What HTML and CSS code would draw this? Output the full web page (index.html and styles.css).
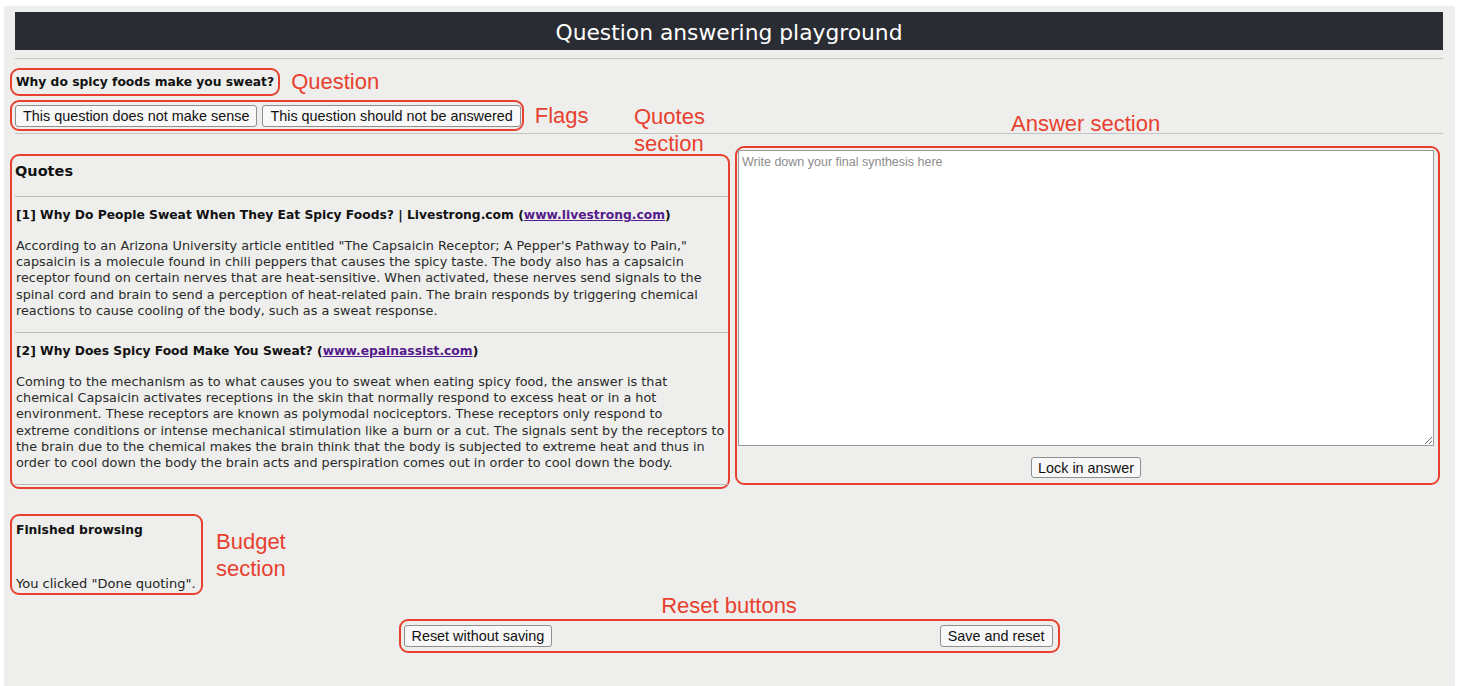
FILE: index.html
```html
<!DOCTYPE html>
<html lang="en">
<head>
<meta charset="utf-8">
<title>Question answering playground</title>
<link rel="stylesheet" href="styles.css">
</head>
<body>
<div class="page">
  <header class="topbar">Question answering playground</header>
  <hr class="rule">

  <div class="annot-row">
    <div class="box box-question"><h3 class="question">Why do spicy foods make you sweat?</h3></div>
    <span class="label">Question</span>
  </div>

  <div class="annot-row">
    <div class="box box-flags">
      <button class="btn">This question does not make sense</button>
      <button class="btn">This question should not be answered</button>
    </div>
    <span class="label">Flags</span>
  </div>

  <hr class="rule rule-tight">

  <span class="label label-quotes">Quotes<br>section</span>
  <span class="label label-answer">Answer section</span>

  <div class="main">
    <section class="box box-quotes">
      <h2 class="quotes-head">Quotes</h2>
      <hr class="qrule">
      <div class="quote">
        <h4 class="quote-title">[1] Why Do People Sweat When They Eat Spicy Foods? | Livestrong.com (<a href="#">www.livestrong.com</a>)</h4>
        <p class="quote-text">According to an Arizona University article entitled "The Capsaicin Receptor; A Pepper's Pathway to Pain,"<br>capsaicin is a molecule found in chili peppers that causes the spicy taste. The body also has a capsaicin<br>receptor found on certain nerves that are heat-sensitive. When activated, these nerves send signals to the<br>spinal cord and brain to send a perception of heat-related pain. The brain responds by triggering chemical<br>reactions to cause cooling of the body, such as a sweat response.</p>
      </div>
      <hr class="qrule">
      <div class="quote">
        <h4 class="quote-title">[2] Why Does Spicy Food Make You Sweat? (<a href="#">www.epainassist.com</a>)</h4>
        <p class="quote-text">Coming to the mechanism as to what causes you to sweat when eating spicy food, the answer is that<br>chemical Capsaicin activates receptions in the skin that normally respond to excess heat or in a hot<br>environment. These receptors are known as polymodal nociceptors. These receptors only respond to<br>extreme conditions or intense mechanical stimulation like a burn or a cut. The signals sent by the receptors to<br>the brain due to the chemical makes the brain think that the body is subjected to extreme heat and thus in<br>order to cool down the body the brain acts and perspiration comes out in order to cool down the body.</p>
      </div>
      <hr class="qrule">
    </section>

    <section class="box box-answer">
      <textarea class="answer" placeholder="Write down your final synthesis here"></textarea>
      <div class="lock-row"><button class="btn">Lock in answer</button></div>
    </section>
  </div>

  <div class="annot-row budget-row">
    <div class="box box-budget">
      <h4 class="budget-head">Finished browsing</h4>
      <p class="budget-text">You clicked "Done quoting".</p>
    </div>
    <span class="label label-budget">Budget<br>section</span>
  </div>

  <div class="label label-reset">Reset buttons</div>
  <div class="box box-reset">
    <button class="btn">Reset without saving</button>
    <button class="btn">Save and reset</button>
  </div>
</div>
</body>
</html>
```

FILE: styles.css
```css
html, body {
  margin: 0;
  padding: 0;
  background: #ffffff;
}

body {
  font-family: "DejaVu Sans", Verdana, sans-serif;
  color: #222;
}

.page {
  position: relative;
  margin: 6px 3px 0 4px;
  padding: 6px 12px 0 11px;
  background: #eeefec;
  height: 680px;
  box-sizing: border-box;
}

.topbar {
  height: 38px;
  box-sizing: border-box;
  padding-top: 4px;
  line-height: 34px;
  background: #2a2c33;
  color: #fff;
  text-align: center;
  font-size: 21.8px;
}

.rule {
  border: 0;
  border-top: 1px solid #c4c5c3;
  margin: 8px 0 0;
  height: 0;
}

.rule-tight {
  margin-top: 2px;
}

.annot-row {
  display: flex;
  align-items: center;
  gap: 11px;
  margin-top: 4px;
}

.annot-row:first-of-type {
  margin-top: 9px;
}

.box {
  border: 2px solid #e8402f;
  border-radius: 9px;
  box-sizing: border-box;
}

.box-question {
  height: 28px;
  margin-left: -5px;
  padding: 0 4px;
  display: flex;
  align-items: center;
}

.question {
  margin: 0;
  font-size: 12.3px;
  font-weight: bold;
  color: #111;
}

.label {
  font-family: "Liberation Sans", Arial, sans-serif;
  font-size: 22px;
  color: #e8402f;
  line-height: 24px;
}

.box-flags {
  margin-left: -5px;
  padding: 3px 1px 2px 3px;
  display: flex;
  gap: 5px;
}

.btn {
  font-family: "Liberation Sans", Arial, sans-serif;
  font-size: 14.4px;
  color: #111;
  background: #f8f8f8;
  border: 1px solid #8f8f8f;
  border-radius: 3px;
  height: 22px;
  padding: 0 7px;
  margin: 0;
  line-height: 20px;
}

.label-quotes {
  position: absolute;
  left: 630px;
  top: 97px;
  line-height: 27px;
}

.label-answer {
  position: absolute;
  left: 1007px;
  top: 106px;
}

.main {
  display: flex;
  align-items: flex-start;
  gap: 5px;
  margin-top: 12px;
  margin-left: -5px;
}

.box-quotes {
  width: 720px;
  height: 335px;
  margin-top: 8px;
  padding: 5px 0 0 3px;
}

.quotes-head {
  margin: 0;
  font-size: 14.5px;
  line-height: 20px;
  font-weight: bold;
  color: #111;
}

.qrule {
  border: 0;
  border-top: 1px solid #b9bab8;
  margin: 15px 0 0;
  height: 0;
}

.quote {
  padding-left: 1px;
}

.quote-title {
  margin: 10px 0 14px;
  font-size: 12.3px;
  line-height: 17px;
  font-weight: bold;
  color: #111;
}

.quote-title a {
  color: #551a8b;
}

.quote-text {
  margin: 0 0 13px;
  font-size: 12.8px;
  line-height: 16.2px;
  color: #2a2a2a;
  white-space: nowrap;
}

.quote + .qrule {
  margin-top: 0;
}

.box-answer {
  width: 705px;
  height: 339px;
  padding: 2px 4px 0 1px;
  display: flex;
  flex-direction: column;
}

.answer {
  width: 696px;
  height: 296px;
  box-sizing: border-box;
  margin: 0;
  border: 1px solid #9a9a9a;
  background: #fff;
  padding: 4px 3px;
  font-family: "Liberation Sans", Arial, sans-serif;
  font-size: 12.5px;
  resize: both;
}

.answer::placeholder {
  color: #8c8c8c;
}

.lock-row {
  display: flex;
  justify-content: center;
  margin-top: 11px;
}

.lock-row .btn {
  height: 21px;
  padding: 0 6px;
}

.budget-row {
  margin-top: 25px;
  gap: 13px;
}

.box-budget {
  margin-left: -5px;
  width: 193px;
  height: 81px;
  padding: 6px 4px 0;
}

.budget-head {
  margin: 0;
  font-size: 12.3px;
  line-height: 17px;
  font-weight: bold;
  color: #111;
}

.budget-text {
  margin: 36px 0 0;
  font-size: 13px;
  line-height: 17px;
  white-space: nowrap;
}

.label-budget {
  line-height: 27px;
}

.label-reset {
  text-align: center;
  line-height: 22px;
  margin-top: 0;
}

.box-reset {
  width: 661px;
  height: 34px;
  margin: 2px auto 0;
  padding: 4px 5px 0 3px;
  display: flex;
  justify-content: space-between;
  align-items: flex-start;
}
```
